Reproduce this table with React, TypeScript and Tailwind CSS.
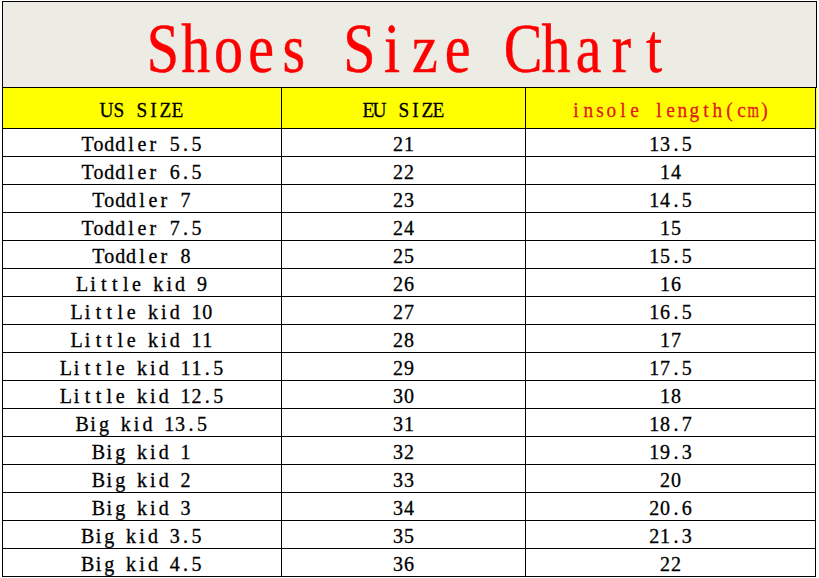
const rows: [string, string, string][] = [
  ['Toddler 5.5', '21', '13.5'],
  ['Toddler 6.5', '22', '14'],
  ['Toddler 7', '23', '14.5'],
  ['Toddler 7.5', '24', '15'],
  ['Toddler 8', '25', '15.5'],
  ['Little kid 9', '26', '16'],
  ['Little kid 10', '27', '16.5'],
  ['Little kid 11', '28', '17'],
  ['Little kid 11.5', '29', '17.5'],
  ['Little kid 12.5', '30', '18'],
  ['Big kid 13.5', '31', '18.7'],
  ['Big kid 1', '32', '19.3'],
  ['Big kid 2', '33', '20'],
  ['Big kid 3', '34', '20.6'],
  ['Big kid 3.5', '35', '21.3'],
  ['Big kid 4.5', '36', '22'],
]

// serif glyphs laid out on a fixed grid, like the spreadsheet's SimSun text
function Mono({ text, cell, squeeze = false }: { text: string; cell: string; squeeze?: boolean }) {
  return (
    <span className="flex">
      {text.split('').map((c, i) => (
        <span key={i} className={`${cell} flex justify-center whitespace-pre`}>
          <span className={squeeze ? (c === 'm' ? 'inline-block scale-x-[0.7]' : 'inline-block scale-x-[0.92]') : ''}>{c}</span>
        </span>
      ))}
    </span>
  )
}

export default function App() {
  return (
    <div className="w-[819px] h-[578px] bg-white pl-[2px] pt-[1px] overflow-hidden [font-family:'Liberation_Serif',serif]">
      <div className="w-[815px] border-l border-t border-black">
        {/* Title */}
        <div className="h-[86px] border-r border-b border-black bg-[#ecebe4] flex items-center justify-center">
          <div className="scale-y-[1.2] translate-y-[4px] -translate-x-[1px] text-[#ff0000] text-[58px] leading-none [-webkit-text-stroke:0.4px_#ff0000]">
            <Mono text="Shoes Size Chart" cell="w-[32.75px]" />
          </div>
        </div>

        {/* Header */}
        <div className="grid grid-cols-[279px_244px_290px] h-[41px] bg-[#ffff00] text-[21px] leading-none [-webkit-text-stroke:0.3px]">
          <div className="border-r border-b border-black flex items-center justify-center pt-[5px]">
            <Mono text="US SIZE" cell="w-[11.8px]" squeeze />
          </div>
          <div className="border-r border-b border-black flex items-center justify-center pt-[5px]">
            <Mono text="EU SIZE" cell="w-[11.8px]" squeeze />
          </div>
          <div className="border-r border-b border-black flex items-center justify-center pt-[5px] text-[#e3171b]">
            <Mono text="insole length(cm)" cell="w-[11.8px]" squeeze />
          </div>
        </div>

        {/* Rows */}
        {rows.map(([us, eu, cm]) => (
          <div key={us} className="grid grid-cols-[279px_244px_290px] h-[28px] text-[20px] leading-none text-black [-webkit-text-stroke:0.3px]">
            <div className="border-r border-b border-black flex items-center justify-center pt-[2px]">
              <Mono text={us} cell="w-[10.9px]" />
            </div>
            <div className="border-r border-b border-black flex items-center justify-center pt-[2px]">
              <Mono text={eu} cell="w-[10.9px]" />
            </div>
            <div className="border-r border-b border-black flex items-center justify-center pt-[2px]">
              <Mono text={cm} cell="w-[10.9px]" />
            </div>
          </div>
        ))}
      </div>
    </div>
  )
}
